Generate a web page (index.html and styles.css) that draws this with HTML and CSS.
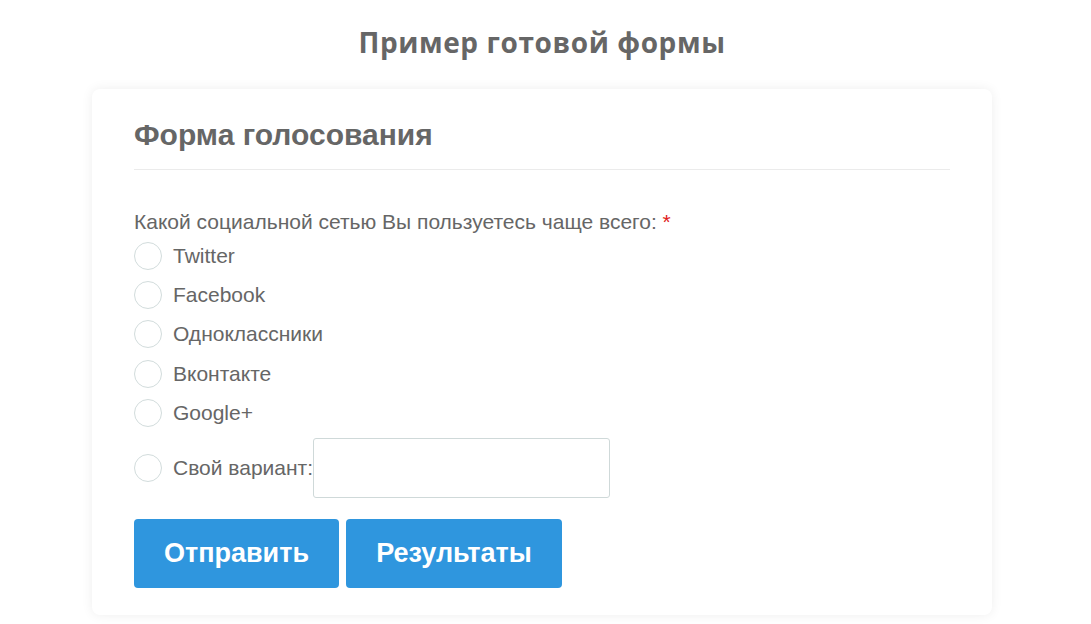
FILE: index.html
```html
<!DOCTYPE html>
<html lang="ru">
<head>
<meta charset="utf-8">
<title>Пример готовой формы</title>
<link rel="stylesheet" href="styles.css">
</head>
<body>
<main class="page">
  <h1 class="page-title">Пример готовой формы</h1>
  <section class="card">
    <h2 class="card-title">Форма голосования</h2>
    <form class="poll">
      <p class="question">Какой социальной сетью Вы пользуетесь чаще всего: <span class="req">*</span></p>
      <label class="option"><span class="radio"></span><span>Twitter</span></label>
      <label class="option"><span class="radio"></span><span>Facebook</span></label>
      <label class="option"><span class="radio"></span><span>Одноклассники</span></label>
      <label class="option"><span class="radio"></span><span>Вконтакте</span></label>
      <label class="option"><span class="radio"></span><span>Google+</span></label>
      <label class="option option-own"><span class="radio"></span><span>Свой вариант:</span><span class="own-input"></span></label>
      <div class="buttons">
        <button type="button" class="btn btn-send">Отправить</button>
        <button type="button" class="btn btn-results">Результаты</button>
      </div>
    </form>
  </section>
</main>
</body>
</html>
```

FILE: styles.css
```css
* { box-sizing: border-box; }
html, body { margin: 0; padding: 0; }
body {
  background: #ffffff;
  font-family: "Liberation Sans", Arial, sans-serif;
  color: #666666;
  height: 624px;
  overflow: hidden;
}
.page {
  display: flex;
  flex-direction: column;
  align-items: center;
  padding-right: 7px;
}
.page-title {
  margin: 24px 0 0 0;
  height: 65px;
  font-family: "Open Sans", "Liberation Sans", sans-serif;
  font-weight: 700;
  font-size: 28px;
  line-height: 36px;
  color: #666666;
  letter-spacing: 0.6px;
}
.card {
  width: 900px;
  background: #fff;
  border-radius: 8px;
  box-shadow: 0 0 12px rgba(0, 0, 0, 0.07);
  padding: 28px 42px 27px 42px;
}
.card-title {
  margin: 0;
  font-size: 30px;
  line-height: 36px;
  font-weight: 700;
  color: #666666;
  padding-bottom: 16px;
  border-bottom: 1px solid #ebebeb;
}
.poll {
  display: flex;
  flex-direction: column;
  padding-top: 40px;
}
.question {
  margin: 0 0 2px 0;
  font-size: 21px;
  line-height: 24px;
}
.req { color: #e02020; }
.option {
  display: flex;
  align-items: center;
  gap: 11px;
  height: 39.3px;
  font-size: 21px;
}
.radio {
  width: 28px;
  height: 28px;
  border-radius: 50%;
  border: 1px solid #d2dcdc;
  background: #fff;
  flex: none;
}
.option-own {
  height: 60px;
  margin-top: 6px;
}
.own-input {
  width: 297px;
  height: 60px;
  border: 1px solid #cfd9d9;
  border-radius: 3px;
  margin-left: -11px;
  background: #fff;
}
.buttons {
  display: flex;
  gap: 7px;
  margin-top: 21px;
}
.btn {
  height: 69px;
  border: none;
  border-radius: 4px;
  background: #2f96de;
  color: #fff;
  font-family: "Liberation Sans", Arial, sans-serif;
  font-weight: 700;
  font-size: 27px;
  padding: 0;
}
.btn-send { width: 205px; }
.btn-results { width: 216px; }
```
